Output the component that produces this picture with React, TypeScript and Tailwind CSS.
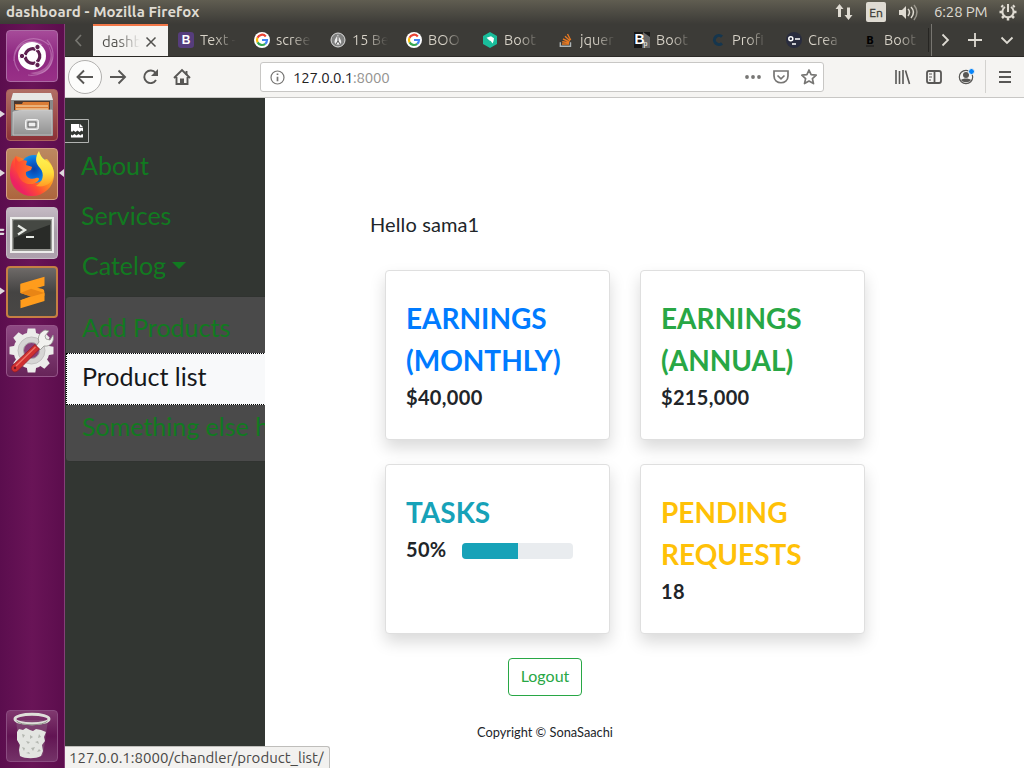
import React from "react";

const UI = "font-['Ubuntu','Noto_Sans',sans-serif]";

function Tile({ className, children, left, right }: { className: string; children: React.ReactNode; left?: "one" | "two"; right?: boolean }) {
  return (
    <div className="relative ml-1.5 h-[52px] w-[52px] shrink-0">
      <div className={"h-full w-full overflow-hidden rounded-[4px] border " + className}>
        <svg viewBox="1 1 50 50" className="block h-full w-full">{children}</svg>
      </div>
      {left === "one" && (
        <svg className="absolute top-[21px] -left-1.5 h-2 w-[5px]" viewBox="0 0 5 8"><path d="M0 0.5L5 4L0 7.5Z" fill="#dedadd" /></svg>
      )}
      {left === "two" && (
        <svg className="absolute top-[21px] -left-1.5 h-2 w-[5px]" viewBox="0 0 5 8"><path d="M0 .7h3.5l1 1.1-1 1.1H0ZM0 4.7h3.5l1 1.1-1 1.1H0Z" fill="#dedadd" /></svg>
      )}
      {right && (
        <svg className="absolute top-[21px] left-[53px] h-2 w-[5px]" viewBox="0 0 5 8"><path d="M5 0L0 4L5 8Z" fill="#dedadd" /></svg>
      )}
    </div>
  );
}

function Launcher() {
  return (
    <nav className="flex w-[65px] shrink-0 flex-col gap-[7px] border-r border-[#854078] bg-gradient-to-r from-[#5b0d4e] via-[#691457] to-[#5c0d4d] pt-1.5 pb-1.5">
      <Tile className="border-[#ad6aa5] bg-gradient-to-b from-[#a64b99] via-[#8e2781] to-[#993087]">
        <path d="M8 31C7 10 29 2 43 15M13 41C-1 24 19 3 36 15M41 10c14 16 2 38-19 35" stroke="#d299cb" strokeOpacity=".5" strokeWidth="1.2" fill="none" />
        <path d="M42 15c12 16-2 34-18 28 24-2 22-20 18-28Z" fill="#e2badb" opacity=".35" />
        <circle cx="26" cy="26" r="14" fill="#fff" />
        <circle cx="26.5" cy="26" r="7.3" fill="none" stroke="#5e2050" strokeWidth="3.2" strokeDasharray="13.8 1.5" transform="rotate(-55 26.5 26)" />
        <g fill="#5e2050" stroke="#fff" strokeWidth="1"><circle cx="16" cy="26" r="2.7" /><circle cx="31.5" cy="17" r="2.7" /><circle cx="31.5" cy="35" r="2.7" /></g>
      </Tile>
      <Tile left="one" className="border-[#ad625e] bg-gradient-to-b from-[#b06e65] to-[#8b3036]">
        <defs><linearGradient id="cab" x2="0" y2="1"><stop stopColor="#c4c4c4" /><stop offset="1" stopColor="#929292" /></linearGradient></defs>
        <path d="M7 4h38l2 8v35H5V12Z" fill="#898989" />
        <path d="M7 4h38l2 7H5Z" fill="#e7e7e5" />
        <path d="M8 12h36v9H8Z" fill="#4b372f" />
        <path d="M9 15h7l1-2h26v8H9Z" fill="#db7c35" />
        <path d="M10 17h32M10 20h32" stroke="#fae5bd" strokeWidth="1.2" />
        <path d="M7 23l9-2h30v25H7Z" fill="url(#cab)" stroke="#d0d0d0" strokeWidth=".7" />
        <rect x="19.5" y="30.5" width="13" height="10" rx="2" fill="#d2d2d2" stroke="#f4f4f4" />
        <rect x="22" y="33" width="8" height="5" fill="#eee" stroke="#555" />
      </Tile>
      <Tile left="one" right className="border-[#d4a084] bg-gradient-to-b from-[#bc8960] to-[#ad653e]">
        <defs>
          <linearGradient id="fox" x1=".9" y1=".1" x2=".15" y2=".7"><stop stopColor="#ffd53a" /><stop offset=".4" stopColor="#ff921f" /><stop offset=".72" stopColor="#ff4a35" /><stop offset="1" stopColor="#ec2362" /></linearGradient>
          <radialGradient id="globe"><stop stopColor="#0a3fa5" /><stop offset=".6" stopColor="#0868d5" /><stop offset="1" stopColor="#1292ea" /></radialGradient>
          <linearGradient id="tail" x2="0" y2="1"><stop stopColor="#fff65a" /><stop offset=".6" stopColor="#ffdf3b" /><stop offset="1" stopColor="#ff9c25" /></linearGradient>
          <linearGradient id="snout" x1="0" x2="1"><stop stopColor="#ff4038" /><stop offset="1" stopColor="#ff8a1f" /></linearGradient>
        </defs>
        <path d="M10 8C5 13 4 20 4 27a22 21 0 0 0 44 0c0-7-3-12-7-16L26 14Z" fill="url(#fox)" />
        <circle cx="28" cy="21" r="14" fill="url(#globe)" />
        <path d="M10 8c0 3 1 5 3 6 3-2 6-2 8-1l-1 4c2 1 5 1 6 2l-1 3-5 2c-1 6 5 8 10 6 3-1 4 1 2 3-6 6-18 3-20-7C9 22 8 14 10 8Z" fill="url(#snout)" />
        <path d="M33 3c-4 6-4 12 1 17 5 6 3 14-4 18 10 2 17-4 18-11 0-9-5-13-9-15-3-2-5-5-6-9Z" fill="url(#tail)" />
      </Tile>
      <Tile left="two" className="border-[#c5bac4] bg-gradient-to-b from-[#c5bac4] via-[#a79da6] to-[#aea0ad]">
        <path d="M4 10h44v36H4Z" fill="#ededeb" />
        <path d="M6 12h40v32H6Z" fill="#979893" />
        <path d="M7.500 13.500h37v28.500H7.500Z" fill="#292b28" />
        <path d="M7.500 13.500h37v4L7.500 31Z" fill="#454843" />
        <path d="M12 18.500l7 4.500-7 4.500" stroke="#e6e9e4" strokeWidth="2.300" fill="none" /><path d="M20 30h8" stroke="#e6e9e4" strokeWidth="2" />
      </Tile>
      <Tile left="one" className="border-2 border-[#c67f43] bg-gradient-to-b from-[#6e6a68] via-[#454443] to-[#494745]">
        <path d="M14 34.500l25-7.500v8.500L14 43Z" fill="#ff9c1c" />
        <path d="M14 17.500l25-7.500v9.500L14 27Z" fill="#ff9c1c" />
        <path d="M14 18v9l11 3.500-11 4v.5l25-5c0-5 0-6-2-7l-12-3Z" fill="#ff9c1c" />
        <path d="M25 22.500l14 4.500-14 4-11-4Z" fill="#e98515" />
      </Tile>
      <Tile className="border-[#955489] bg-gradient-to-b from-[#8e4983] to-[#672459]">
        <g transform="translate(25.500 25.500)" fill="#ececea">
          {[0, 45, 90, 135].map((a) => <path key={a} transform={`rotate(${a})`} d="M-3.800-22h7.600l1.200 7v30l-1.200 7h-7.600l-1.200-7v-30Z" />)}
          <circle r="18" />
        </g>
        <circle cx="25.500" cy="25.500" r="13.500" fill="#d6d5d4" stroke="#c2c0c0" />
        <circle cx="25.500" cy="25.500" r="8" fill="#884078" stroke="#aaa6a8" />
        <path d="M30 21l3-4c-2-5 1-10 6-12l4 1-4 5 1 3 4 1 3-5c2 7-3 12-9 11l-4 4Z" fill="#f2f2ef" stroke="#92938e" strokeWidth=".8" />
        <path d="M29 19.500l4.500 4.500-22 22c-4 3-8-2-5-5.500Z" fill="#d03030" stroke="#941d27" strokeWidth=".8" />
        <path d="M29.500 22L10 41" stroke="#ef7667" strokeWidth="1.300" />
        <circle cx="9" cy="43" r="1.200" fill="#6f1824" />
      </Tile>
      <div className="mt-auto">
        <Tile className="border-[#8a4c80] bg-gradient-to-b from-[#80386f] via-[#621453] to-[#743268]">
          <path d="M10 10l4 35c3 3 20 3 23 0l5-35Z" fill="#885b7e" opacity=".55" />
          <path d="M11 22l2-3 4 1 3-2 4 2 3 1 3-2 5 1 5 2-2 5 1 4-3 4 1 6-2 5c-5 3-16 3-21 0l-1-6 1-5-3-5Z" fill="#e3e5e1" />
          <g fill="#b3b7b0"><path d="M16 24l3 1-2 3ZM24 25l3 2-3 2ZM33 24l2 3-3 1ZM20 31l4 1-2 2ZM29 32l3-1 1 3ZM16 37l3 1-1 3ZM25 38l4-1-2 4ZM33 39l2 2-4 1ZM20 43l3-1 1 2Z" /></g>
          <ellipse cx="26" cy="9" rx="17" ry="4.800" fill="none" stroke="#deded9" strokeWidth="3" />
          <path d="M10.500 11c4 5 27 5 31 0" fill="none" stroke="#8d9388" />
        </Tile>
      </div>
    </nav>
  );
}

function Favicon({ kind }: { kind: string }) {
  return (
    <svg viewBox="0 0 16 16" className="h-4 w-4 shrink-0">
      {kind === "bootstrap" && <><rect width="16" height="16" rx="3" fill="#563d7c" /><text x="8" y="12" textAnchor="middle" fontFamily="Liberation Sans" fontWeight="bold" fontSize="12" fill="#fff">B</text></>}
      {kind === "google" && <><circle cx="8" cy="8" r="8" fill="#fff" /><g fill="none" strokeWidth="2.2"><path d="M11.8 4.400A5 5 0 0 0 3.500 5.700" stroke="#ea4335" /><path d="M3.500 5.700A5 5 0 0 0 3.600 10.400" stroke="#fbbc05" /><path d="M3.600 10.400A5 5 0 0 0 11.200 11.800" stroke="#34a853" /><path d="M8 8h5a5 5 0 0 1-1.800 3.800" stroke="#4285f4" /></g></>}
      {kind === "drop" && <><circle cx="8" cy="8" r="7" fill="#808180" stroke="#ddd" /><path d="M8 2.500C6 6 4 8 4.800 11c1.500 2.200 5 2.200 6.300 0C12 8 9 6 8 2.500Z" fill="#ededed" /><path d="M8 4v5L6 12m2-3 2 3" stroke="#515151" fill="none" /></>}
      {kind === "hex" && <><path d="M8 0l7 4v8l-7 4-7-4V4Z" fill="#19bd9b" /><path d="M4.500 5.800L9 4.300l3 2-.5 3-1 2.200L8.800 9 7.500 8.500Z" fill="#fff" /></>}
      {kind === "stack" && <g fill="none" stroke="#e87922" strokeWidth="1.400"><path d="M4 12h7M4.200 9.700l6.900 1M5 7l6.400 2.800M7 4.200l5 4.500M9.500 2l3.200 6" /><path d="M2.300 10.300v4h10.200v-4" stroke="#aeb5b7" /></g>}
      {kind === "bp" && <><path d="M0 0h16v16H0Z" fill="#171717" /><path d="M9 0l7 5v11H8Z" fill="#686868" /><text x="0.500" y="12" fontFamily="Liberation Sans" fontWeight="bold" fontSize="14" fill="#fff">B</text><text x="9.500" y="14" fontFamily="Liberation Sans" fontSize="7" fill="#fff">p</text></>}
      {kind === "c" && <path d="M12 4.700A4.500 4.500 0 1 0 12 11.300" stroke="#15364e" strokeWidth="3" fill="none" />}
      {kind === "face" && <><circle cx="8" cy="8" r="8" fill="#292c3e" /><circle cx="4.800" cy="6.700" r="2" fill="none" stroke="#fff" strokeWidth="1.500" /><path d="M9 7h5M6 12h4" stroke="#fff" strokeWidth="1.500" /></>}
      {kind === "black" && <><text x="8" y="12" textAnchor="middle" fontFamily="DejaVu Sans" fontWeight="bold" fontSize="10" fill="#000">B</text><path d="M4 14h8" stroke="#171717" /></>}
    </svg>
  );
}

const tabs: [string, string][] = [
  ["bootstrap", "Text -"], ["google", "scree"], ["drop", "15 Be"], ["google", "BOO"], ["hex", "Boot"],
  ["stack", "jquer"], ["bp", "Boot"], ["c", "Profi"], ["face", "Crea"], ["black", "Boot"],
];

function TabStrip() {
  return (
    <div className="flex h-[33px] shrink-0 overflow-hidden border-b border-[#2b2926] bg-[#3c3b37]">
      <svg className="h-8 w-7 shrink-0" viewBox="0 0 28 32"><path d="M16 11l-5 5.500 5 5.500" stroke="#777671" strokeWidth="1.700" fill="none" /></svg>
      <div className="flex h-[33px] w-[75px] shrink-0 items-center border-t-2 border-[#f27748] bg-[#f5f4f2] pl-[9px]">
        <span className="w-[38px] overflow-hidden bg-gradient-to-r from-[#4e4d49] from-40% to-[#f5f4f2] bg-clip-text text-[15px] leading-5 whitespace-nowrap text-transparent">dashb</span>
        <svg className="ml-[5px] h-3 w-3" viewBox="0 0 12 12"><path d="M1.500 1.500l9 9m0-9l-9 9" stroke="#52514e" strokeWidth="1.500" /></svg>
      </div>
      {tabs.map(([kind, label], i) => (
        <div key={i} className={"flex h-8 shrink-0 items-center overflow-hidden pl-2.5 " + (i === 9 ? "w-[78px]" : "w-[76px]")}>
          <Favicon kind={kind} />
          <span className="ml-1.5 w-[38px] shrink-0 bg-gradient-to-r from-[#d9d4c9] from-40% to-[#3c3b37] to-95% bg-clip-text text-[14.500px] leading-5 whitespace-nowrap text-transparent">{label}</span>
          <i className={"ml-1.5 h-6 w-px shrink-0 " + (i === 9 ? "bg-[#262522]" : "bg-[#72716b]")} />
        </div>
      ))}
      <svg className="h-8 w-[93px] shrink-0" viewBox="931 24 93 32"><path d="M932.500 24v32" stroke="#777570" /><g fill="none" stroke="#dedbd3" strokeWidth="1.800"><path d="M943.500 34.500l5.500 5.500-5.500 5.500M969 40h14M976 33v14M1002.500 37.500l5.500 5.500 5.500-5.500" /></g></svg>
    </div>
  );
}

function NavBar() {
  return (
    <div className="flex h-[41px] shrink-0 items-center border-b border-[#c8c7c5] bg-[#f5f4f2]">
      <svg className="h-10 w-[136px] shrink-0" viewBox="65 57 136 40" fill="none" stroke="#585755" strokeWidth="1.900">
        <circle cx="85" cy="77" r="16.500" fill="#fcfcfb" stroke="#b1b0ae" strokeWidth="1" />
        <path d="M93 77H78M84 70.500L77.500 77l6.500 6.500M110 77h15M118.500 70.500L125 77l-6.500 6.500" />
        <path d="M155.600 73A6.300 6.300 0 1 0 156 80" /><path d="M158 69v7h-7Z" fill="#585755" stroke="none" />
        <path d="M174 78l8-8 8 8M176.500 77v7h11v-7" /><path d="M180 78.500h4v6h-4Z" fill="#585755" stroke="none" /><path d="M186.500 71v4" />
      </svg>
      <div className="ml-[59px] flex h-[30px] w-[564px] shrink-0 items-center rounded-[3px] border border-[#c8c7c5] bg-white">
        <svg className="ml-[9px] h-[15px] w-[15px]" viewBox="0 0 15 15" fill="none" stroke="#777674" strokeWidth="1.200"><circle cx="7.500" cy="7.500" r="6.500" /><path d="M7.500 6.700v4.500M7.500 3.500v1.500" strokeWidth="1.700" /></svg>
        <span className="ml-2 pt-px text-[15px] leading-5 tracking-[-0.2px] text-[#22211f]">127.0.0.1<span className="text-[#949390]">:8000</span></span>
        <svg className="mr-[3px] ml-auto h-7 w-[80px]" viewBox="740 63 80 28" fill="none" stroke="#777674" strokeWidth="1.700">
          <g fill="#777674" stroke="none"><circle cx="747" cy="77" r="1.900" /><circle cx="753" cy="77" r="1.900" /><circle cx="759" cy="77" r="1.900" /></g>
          <path d="M774 71h14v5c0 9-14 9-14 0Z" /><path d="M777.500 75.500l3.500 3.300 3.500-3.300" />
          <path d="M809 70l2.100 4.700 5.100.5-3.800 3.400 1.100 5-4.500-2.600-4.500 2.600 1.100-5-3.800-3.400 5.100-.5Z" strokeLinejoin="round" />
        </svg>
      </div>
      <svg className="ml-auto h-10 w-[140px] shrink-0" viewBox="884 57 140 40" fill="none" stroke="#585755" strokeWidth="1.800">
        <path d="M896 70v14M899.500 71v13M903 70v14M905.500 70.500L909.500 84" strokeWidth="1.600" />
        <rect x="927" y="71" width="14" height="12" rx="2" /><path d="M934.500 71v12" /><path d="M929 74h3M929 77h3M929 80h2" strokeWidth="1" />
        <circle cx="966" cy="77" r="6.700" strokeWidth="1.200" /><circle cx="966" cy="75" r="3" fill="#585755" stroke="none" /><path d="M961 80c2-2 8-2 10 0-2 3-8 3-10 0Z" fill="#585755" stroke="none" />
        <circle cx="971.500" cy="71.500" r="3" fill="#0784f9" stroke="#f5f4f2" strokeWidth="1" />
        <path d="M985.500 60v33" stroke="#d3d2cf" strokeWidth="1" /><path d="M999 72h12M999 77h12M999 82h12" />
      </svg>
    </div>
  );
}

function Card({ title, color, children }: { title: string; color: string; children: React.ReactNode }) {
  return (
    <section className="h-[170px] rounded-[4px] border border-[#dfdfdf] bg-white px-5 pt-[26px] shadow-[0_8px_16px_rgba(0,0,0,.15)]">
      <h2 className={"mb-px text-[28px] leading-[42px] font-bold whitespace-pre-line " + color}>{title}</h2>
      {children}
    </section>
  );
}

export default function App() {
  return (
    <div className={"flex h-[768px] w-[1024px] flex-col overflow-hidden bg-white " + UI}>
      <header className="flex h-6 shrink-0 items-center bg-gradient-to-b from-[#605d51] to-[#3c3b37] pl-1.5 text-[#dfdbd2]">
        <span className="text-[15px] leading-6 font-bold tracking-[0.080px]">dashboard - Mozilla Firefox</span>
        <svg className="ml-auto h-6 w-[90px]" viewBox="832 0 90 24" fill="#dfdbd2">
          <path d="M839.500 4l4 5h-2.500v8h-3V9h-2.500ZM848.500 20l-4-5h2.500V7.500h3V15h2.500Z" />
          <rect x="866" y="2" width="20" height="20" rx="2" /><text x="876" y="17" textAnchor="middle" fontFamily="Ubuntu, Noto Sans" fontSize="12" fill="#3e3d38" stroke="#3e3d38" strokeWidth=".3">En</text>
          <path d="M899 10h3l4-4v13l-4-4h-3Z" /><g fill="none" stroke="#dfdbd2" strokeWidth="1.500"><path d="M908 9q3 3 0 7M911 7q5 5 0 11" /><path d="M914 5q6 7 0 15" opacity=".5" /></g>
        </svg>
        <span className="ml-3 w-[54px] text-[15px] leading-6 tracking-[-0.150px] whitespace-nowrap">6:28 PM</span>
        <svg className="mr-[7px] ml-[11px] h-[18px] w-[18px]" viewBox="-9 -9 18 18" stroke="#dfdbd2" fill="none"><path d="M-3-5A5.600 5.600 0 1 0 3-5" strokeWidth="2" /><path d="M0-8v8" strokeWidth="2" /><path d="M-5-5l-1.500-1.500M5-5l1.500-1.500M-6 0h-2.500M6 0h2.500M-4 4l-2 2M4 4l2 2M0 6v2.500" strokeWidth="2.500" /></svg>
      </header>
      <div className="flex min-h-0 flex-1">
        <Launcher />
        <div className="relative flex w-[959px] flex-col">
          <TabStrip />
          <NavBar />
          <div className="flex min-h-0 flex-1 font-['Lato',sans-serif]">
            <aside className="w-[200px] shrink-0 overflow-hidden bg-[#323632] pt-[21px] text-[25px] text-[#117a20]">
              <svg className="block h-6 w-6" viewBox="0 0 24 24"><path d="M0 .5h23.500v23H0" fill="none" stroke="#b1b3b1" /><path d="M6 5h9l3 3v4.500l-1.500-1-2 1.500-2-1.500-2 1.500-2-1.500L7 13l-1-1ZM6 15.500l1.500 1 2-1.500 2 1.500 2-1.500 2 1.500 1.500-1.500 1 .5v3H6Z" fill="#fff" /><path d="M14.500 5v3.500H18" stroke="#777" fill="none" /></svg>
              <a className="block h-[50px] pl-4 leading-[45px]">About</a>
              <a className="block h-[50px] pl-4 leading-[45px]">Services</a>
              <a className="flex h-[53px] gap-1.5 pl-[17px] leading-[45px]">Catelog<svg className="mt-[19px] h-[7px] w-[14px]" viewBox="0 0 14 7"><path d="M0 0h14L7 7Z" fill="#117a20" /></svg></a>
              <div className="h-[166px] w-[260px] rounded-[4px] border border-[#303330] bg-[#4a4a4a] whitespace-nowrap">
                <a className="block h-14 pl-4 leading-[60px]">Add Products</a>
                <a className="block h-[52px] border border-dotted border-black bg-[#f8f9fa] pl-[15px] leading-[44px] text-[#16181b]">Product list</a>
                <a className="block pl-4 leading-[42px]">Something else here</a>
              </div>
            </aside>
            <main className="flex flex-1 flex-col text-[#212529]">
              <h1 className="mt-[111px] ml-[105px] h-[61px] text-[20px] leading-[30px] tracking-[0.120px]">Hello sama1</h1>
              <div className="ml-[120px] grid w-[480px] grid-cols-2 gap-x-[30px] gap-y-6">
                <Card title={"EARNINGS\n(MONTHLY)"} color="text-[#007bff]"><p className="text-[20px] leading-[31px] font-bold tracking-[0.330px]">$40,000</p></Card>
                <Card title={"EARNINGS\n(ANNUAL)"} color="text-[#28a745]"><p className="text-[20px] leading-[31px] font-bold tracking-[0.330px]">$215,000</p></Card>
                <Card title="TASKS" color="text-[#17a2b8]"><div className="flex items-center text-[20px] leading-[31px] font-bold"><span className="w-14 tracking-[0.330px]">50%</span><div className="mt-[3px] h-4 w-[111px] overflow-hidden rounded-[4px] bg-[#e9ecef]"><div className="h-full w-1/2 bg-[#17a2b8]" /></div></div></Card>
                <Card title={"PENDING\nREQUESTS"} color="text-[#ffc107]"><p className="text-[20px] leading-[31px] font-bold tracking-[0.330px]">18</p></Card>
              </div>
              <button className="mt-6 ml-[243px] h-[38px] w-[74px] rounded-[4px] border border-[#28a745] pb-0.5 text-base text-[#28a745]">Logout</button>
              <footer className="mt-[27px] ml-[212px] text-[12.800px] leading-[18px]">Copyright © SonaSaachi</footer>
            </main>
          </div>
          <div className="absolute bottom-0 left-0 h-[22px] w-[265px] rounded-tr-[3px] border-t border-r border-[#bfbebb] bg-[#f2f1ef] pl-1 text-[15px] leading-[22px] whitespace-nowrap text-[#494846]">127.0.0.1:8000/chandler/product_list/</div>
        </div>
      </div>
    </div>
  );
}
